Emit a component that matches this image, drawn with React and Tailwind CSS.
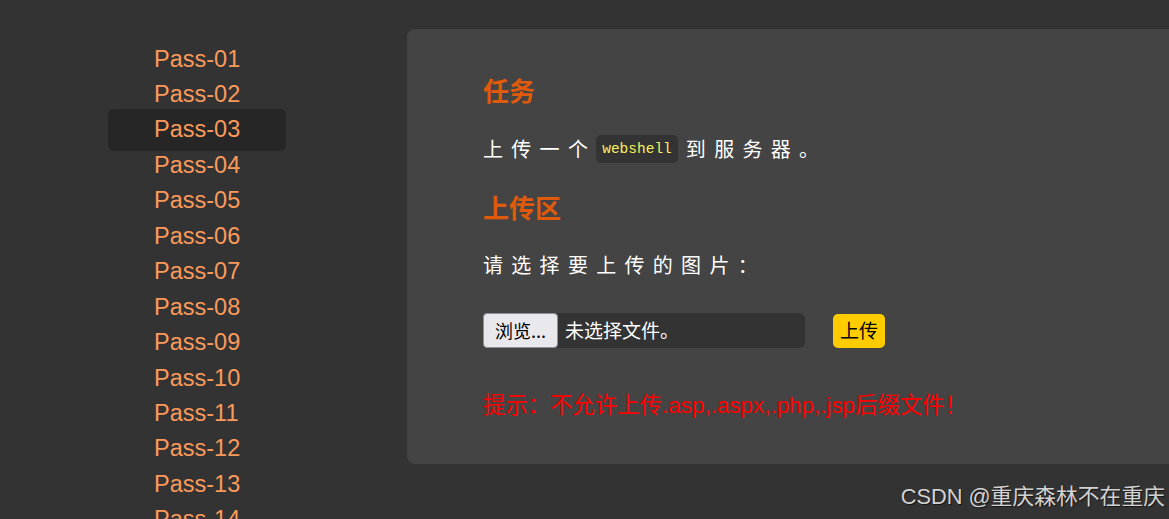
import React from "react";

const passes = Array.from({ length: 14 }, (_, i) => `Pass-${String(i + 1).padStart(2, "0")}`);

const cjk = "font-['Noto_Sans_CJK_SC',sans-serif]";

export default function App() {
  return (
    <div className="relative h-[519px] w-[1169px] overflow-hidden bg-[#333333] font-['Liberation_Sans','Noto_Sans_CJK_SC',sans-serif]">
      <div className="flex">
        {/* sidebar */}
        <ul className="ml-[108px] w-[178px] shrink-0 pt-[41.5px]">
          {passes.map((p) =>
            p === "Pass-03" ? (
              <li
                key={p}
                className="-my-[3px] rounded-md bg-[#262626] py-[3px] pl-[46px] text-[23.5px] leading-[35.46px] text-[#fb9a5b]"
              >
                {p}
              </li>
            ) : (
              <li key={p} className="pl-[46px] text-[23.5px] leading-[35.46px] text-[#fb9a5b]">
                {p}
              </li>
            )
          )}
        </ul>

        {/* main panel */}
        <div className="ml-[121px] mt-[29px] h-[435px] w-[800px] shrink-0 rounded-l-lg bg-[#444444] pl-[76px] pt-[45px]">
          <h2 className={`${cjk} text-[26px] font-bold leading-[32px] text-[#e05a0c]`}>任务</h2>

          <div className={`mt-[29px] flex h-[28px] items-center text-[20px] tracking-[8.3px] text-white ${cjk}`}>
            <span>上传一个</span>
            <code className="mr-[8px] rounded-[5px] bg-[#333333] px-[6px] font-['Liberation_Mono',monospace] text-[14.5px] font-normal leading-[28px] tracking-normal text-[#f7f060]">
              webshell
            </code>
            <span>到服务器。</span>
          </div>

          <h2 className={`${cjk} mt-[28px] text-[26px] font-bold leading-[32px] text-[#e05a0c]`}>上传区</h2>

          <p className={`${cjk} mt-[28px] text-[20px] leading-[28px] tracking-[8.3px] text-white`}>
            请选择要上传的图片：
          </p>

          <div className="mt-[34px] flex items-center">
            <div className="flex h-[35px] w-[322px] items-center rounded-md bg-[#333333]">
              <div className={`${cjk} flex h-[35px] w-[75px] items-center justify-center rounded-[4px] border border-[#8f8f9d] bg-[#e9e9ed] text-[18px] text-black`}>
                浏览...
              </div>
              <span className={`${cjk} ml-[7px] text-[19px] text-white`}>未选择文件。</span>
            </div>
            <button className={`${cjk} ml-[28px] flex h-[34px] w-[52px] items-center justify-center rounded-[5px] bg-[#ffcc00] text-[19px] text-black`}>
              上传
            </button>
          </div>

          <p className="mt-[43px] font-['Liberation_Sans','Noto_Sans_CJK_SC',sans-serif] text-[22.4px] leading-[30px] text-[#ff0000]">
            提示：不允许上传.asp,.aspx,.php,.jsp后缀文件！
          </p>
        </div>
      </div>

      {/* watermark */}
      <div className="absolute bottom-[9px] right-[4px] font-['Liberation_Sans','Noto_Sans_CJK_SC',sans-serif] text-[21.8px] leading-[26px] text-[#d2d2d2] [text-shadow:1px_1px_1px_rgba(0,0,0,0.6)]">
        CSDN @重庆森林不在重庆
      </div>
    </div>
  );
}
